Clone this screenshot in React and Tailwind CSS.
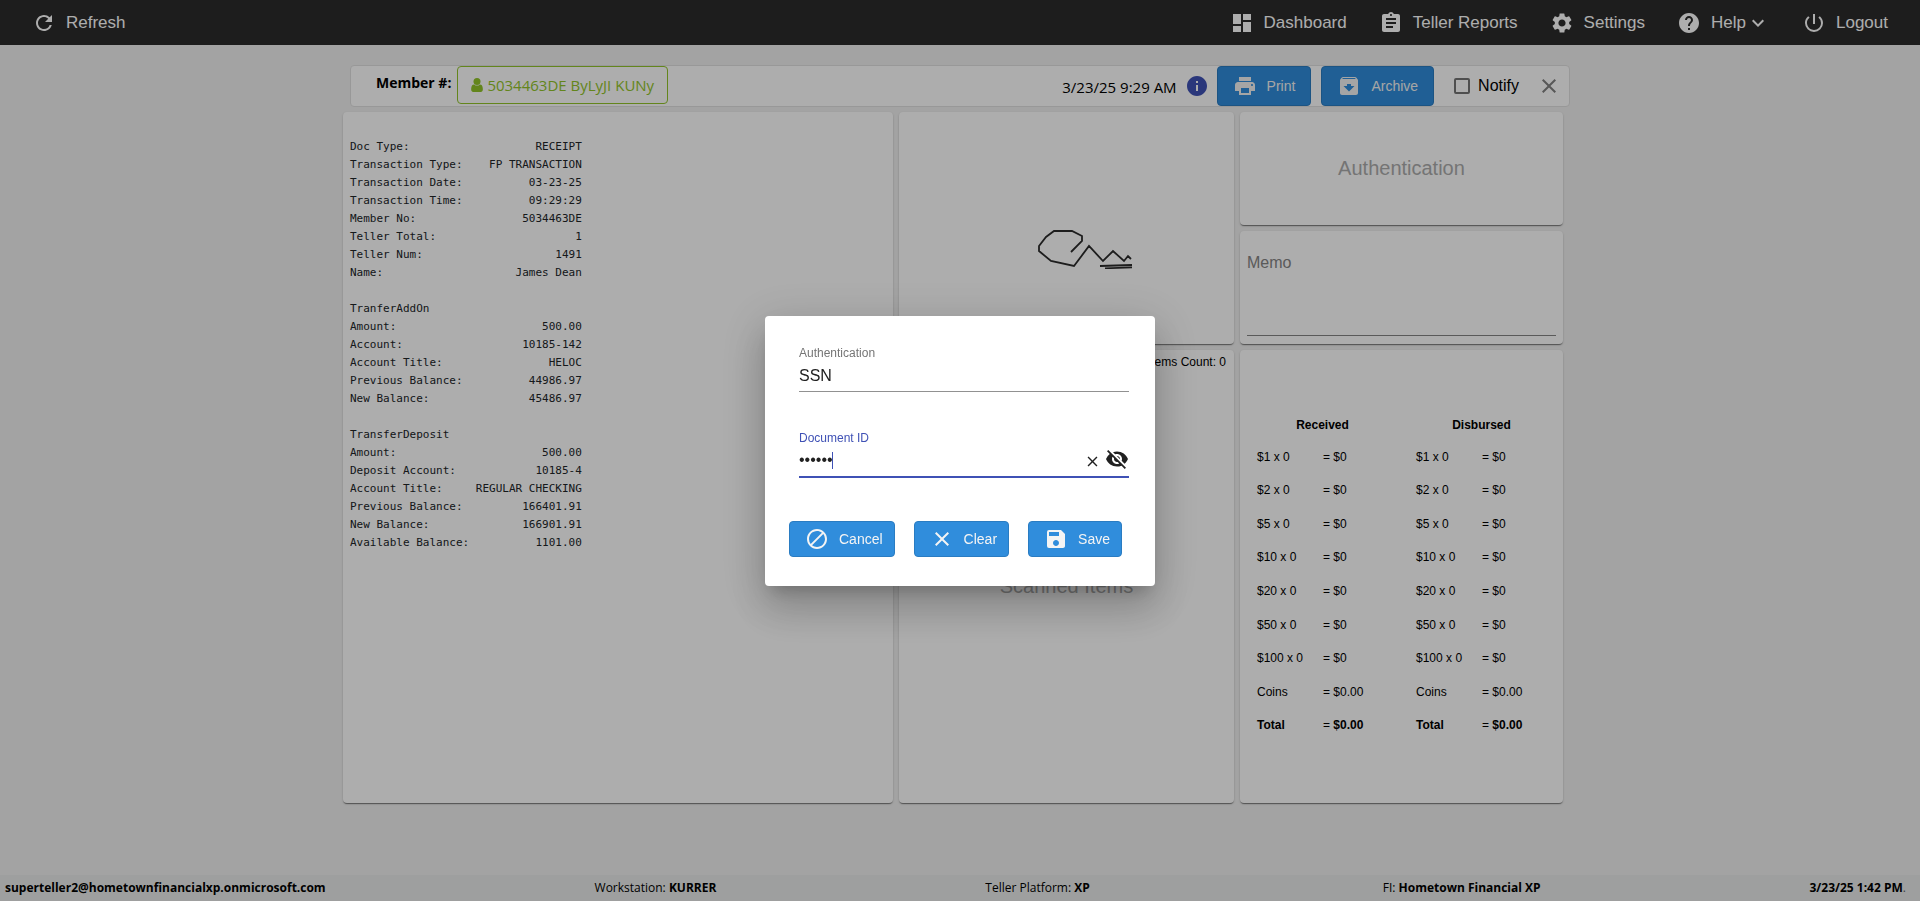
import {
  MdArchive,
  MdAssignment,
  MdBlock,
  MdClose,
  MdDashboard,
  MdHelp,
  MdInfo,
  MdKeyboardArrowDown,
  MdPowerSettingsNew,
  MdPrint,
  MdRefresh,
  MdSave,
  MdSettings,
  MdVisibilityOff,
} from 'react-icons/md'

const navLinks = [
  { label: 'Dashboard', icon: MdDashboard },
  { label: 'Teller Reports', icon: MdAssignment },
  { label: 'Settings', icon: MdSettings },
  { label: 'Help', icon: MdHelp, menu: true },
  { label: 'Logout', icon: MdPowerSettingsNew },
]

const RECEIPT_WIDTH = 35

const receipt = [
  ['Doc Type:', 'RECEIPT'],
  ['Transaction Type:', 'FP TRANSACTION'],
  ['Transaction Date:', '03-23-25'],
  ['Transaction Time:', '09:29:29'],
  ['Member No:', '5034463DE'],
  ['Teller Total:', '1'],
  ['Teller Num:', '1491'],
  ['Name:', 'James Dean'],
  [],
  ['TranferAddOn'],
  ['Amount:', '500.00'],
  ['Account:', '10185-142'],
  ['Account Title:', 'HELOC'],
  ['Previous Balance:', '44986.97'],
  ['New Balance:', '45486.97'],
  [],
  ['TransferDeposit'],
  ['Amount:', '500.00'],
  ['Deposit Account:', '10185-4'],
  ['Account Title:', 'REGULAR CHECKING'],
  ['Previous Balance:', '166401.91'],
  ['New Balance:', '166901.91'],
  ['Available Balance:', '1101.00'],
]

const receiptText = receipt
  .map(([label = '', value = '']) => label + value.padStart(RECEIPT_WIDTH - label.length))
  .join('\n')

const cashRows = [
  ['$1 x 0', '$0'],
  ['$2 x 0', '$0'],
  ['$5 x 0', '$0'],
  ['$10 x 0', '$0'],
  ['$20 x 0', '$0'],
  ['$50 x 0', '$0'],
  ['$100 x 0', '$0'],
  ['Coins', '$0.00'],
]

const cardShadow =
  'shadow-[0_2px_1px_-1px_rgba(0,0,0,0.3),0_1px_1px_0_rgba(0,0,0,0.2),0_1px_3px_0_rgba(0,0,0,0.12)]'

function Card({ className = '', children }) {
  return <section className={`min-w-0 rounded bg-white ${cardShadow} ${className}`}>{children}</section>
}

function ActionButton({ icon: Icon, label, className }) {
  return (
    <button
      type="button"
      className={`flex items-center gap-[10px] rounded border border-[#2a7cc2] bg-[#308ddc] pl-[15px] text-sm text-[#f4f4f4] ${className}`}
    >
      <Icon className="h-6 w-6" />
      {label}
    </button>
  )
}

function UserIcon() {
  return (
    <svg className="h-[14px] w-3" viewBox="0 128 1280 1536" fill="currentColor" aria-hidden="true">
      <path d="M1280 1399q0 109-62.5 187t-150.5 78h-854q-88 0-150.5-78t-62.5-187q0-85 8.5-160.5t31.5-152 58.5-131 94-89 134.5-34.5q131 128 313 128t313-128q76 0 134.5 34.5t94 89 58.5 131 31.5 152 8.5 160.5z" />
      <circle cx="640" cy="512" r="384" />
    </svg>
  )
}

function NavBar() {
  return (
    <nav className="flex h-[45px] items-center justify-between bg-[#2c2c2c] px-8 text-[17px] text-white">
      <a href="#refresh" className="flex items-center gap-[10px]">
        <MdRefresh className="h-6 w-6" />
        Refresh
      </a>
      <div className="flex items-center gap-8">
        {navLinks.map(({ label, icon: Icon, menu }) => (
          <a key={label} href={`#${label.toLowerCase().replace(' ', '-')}`} className="flex items-center gap-[10px]">
            <Icon className="h-6 w-6" />
            <span className="flex items-center">
              {label}
              {menu && <MdKeyboardArrowDown className="h-6 w-6" />}
            </span>
          </a>
        ))}
      </div>
    </nav>
  )
}

function MemberBar() {
  return (
    <header className="mx-auto flex h-[42px] w-full max-w-[1220px] items-start justify-between rounded border border-[#e0e0e0] bg-white pl-[25px]">
      <div className="flex items-center gap-[6px]">
        <span className="pb-1 font-['Open_Sans',sans-serif] text-sm font-bold">Member #:</span>
        <button
          type="button"
          className="flex h-[38px] items-center gap-1 rounded border border-[#92c52a] px-[13px] font-['Open_Sans',sans-serif] text-[15px] text-[#92c52a]"
        >
          <UserIcon />
          5034463DE ByLyJI KUNy
        </button>
      </div>
      <div className="flex items-center">
        <time className="mr-2 pt-[2px] font-['Open_Sans',sans-serif] text-[15px]">3/23/25 9:29 AM</time>
        <MdInfo className="mr-2 h-6 w-6 text-[#3f51b5]" />
        <ActionButton icon={MdPrint} label="Print" className="mr-[10px] h-10 pr-[15px]" />
        <ActionButton icon={MdArchive} label="Archive" className="h-10 pr-[15px]" />
        <label className="mr-[18px] ml-5 flex items-center gap-2 text-base">
          <input type="checkbox" className="h-4 w-4 appearance-none rounded-[2px] border-2 border-[#757575]" />
          Notify
        </label>
        <button type="button" aria-label="Close" className="mr-2 text-[#808080]">
          <MdClose className="h-6 w-6" />
        </button>
      </div>
    </header>
  )
}

function Signature() {
  return (
    <svg className="h-[39px] w-[95px]" viewBox="0 0 95 39" fill="none" stroke="#2b2b2b" strokeWidth="1.8">
      <path d="M33 22 44 11V6L34 1H16L8 7 1 16v5l12 10 23 5 15-20 14 15 10-10 11 10 4-5 3 3" />
      <path d="M62 36 94 35M67 38.3 94 37.3" />
    </svg>
  )
}

function CashTable() {
  const sides = ['Received', 'Disbursed']

  return (
    <table className="h-[333px] w-full table-fixed text-left text-xs">
      <colgroup>
        <col className="w-[66px]" />
        <col className="w-[93px]" />
        <col className="w-[66px]" />
        <col />
      </colgroup>
      <thead>
        <tr className="h-[31px]">
          <th colSpan={2} className="pr-7 text-center">
            Received
          </th>
          <th colSpan={2} className="pr-4 text-center">
            Disbursed
          </th>
        </tr>
      </thead>
      <tbody>
        {cashRows.map(([label, amount]) => (
          <tr key={label}>
            {sides.map((side) => [
              <td key={`${side}-label`}>{label}</td>,
              <td key={`${side}-amount`}>= {amount}</td>,
            ])}
          </tr>
        ))}
        <tr>
          {sides.map((side) => [
            <td key={`${side}-label`} className="font-bold">
              Total
            </td>,
            <td key={`${side}-amount`}>
              = <strong>$0.00</strong>
            </td>,
          ])}
        </tr>
      </tbody>
    </table>
  )
}

function StatusBar() {
  return (
    <footer className="flex h-[26px] items-center justify-between bg-[#e9ebea] pr-[14px] pl-[5px] font-['Open_Sans',sans-serif] text-xs">
      <strong>superteller2@hometownfinancialxp.onmicrosoft.com</strong>
      <span>
        Workstation: <strong>KURRER</strong>
      </span>
      <span>
        Teller Platform: <strong>XP</strong>
      </span>
      <span className="pl-6">
        FI: <strong>Hometown Financial XP</strong>
      </span>
      <span>
        <strong>3/23/25 1:42 PM</strong>
        <span className="text-[#666]">.</span>
      </span>
    </footer>
  )
}

function AuthDialog() {
  return (
    <div className="fixed inset-0 flex items-center justify-center bg-black/32">
      <form
        role="dialog"
        aria-label="Authentication"
        className="h-[270px] w-[390px] rounded bg-white text-[#212121] shadow-[0_11px_15px_-7px_rgba(0,0,0,0.2),0_24px_38px_3px_rgba(0,0,0,0.14),0_9px_46px_8px_rgba(0,0,0,0.12)]"
      >
        <div className="pt-[29px] pr-[26px] pl-[34px]">
          <label htmlFor="auth-type" className="block text-xs leading-4 text-[#757575]">
            Authentication
          </label>
          <input
            id="auth-type"
            type="text"
            defaultValue="SSN"
            className="h-[31px] w-full border-b border-[#919191] text-base outline-none"
          />
        </div>
        <div className="pt-[38px] pr-[26px] pl-[34px]">
          <label htmlFor="document-id" className="block text-xs leading-4 text-[#3f51b5]">
            Document ID
          </label>
          <div className="relative flex h-8 items-center border-b-2 border-[#3f51b5] pb-[2px]">
            <input
              id="document-id"
              type="password"
              defaultValue="503446"
              className="min-w-0 flex-1 text-base outline-none"
            />
            {/* text cursor after the last character */}
            <span className="absolute top-[6px] left-[33px] h-[17px] w-px bg-[#3f51b5]" />
            <button type="button" aria-label="Clear document ID" className="mr-1 pt-1">
              <MdClose className="h-[17px] w-[17px]" />
            </button>
            <button type="button" aria-label="Show document ID" className="pb-[2px]">
              <MdVisibilityOff className="h-6 w-6" />
            </button>
          </div>
        </div>
        <div className="flex gap-[19px] pt-[43px] pl-6">
          <ActionButton icon={MdBlock} label="Cancel" className="h-9 pr-[11px]" />
          <ActionButton icon={MdClose} label="Clear" className="h-9 pr-[11px]" />
          <ActionButton icon={MdSave} label="Save" className="h-9 pr-[11px]" />
        </div>
      </form>
    </div>
  )
}

export default function App() {
  return (
    <div className="flex min-h-screen flex-col bg-[#f1f1f1] font-['Liberation_Sans',Arial,sans-serif] text-black">
      <NavBar />

      <main className="flex flex-1 flex-col pt-5 pb-[72px]">
        <MemberBar />

        <div className="mt-[5px] flex flex-1 pr-[14px]">
          <div className="mx-auto grid w-full max-w-[1220px] grid-cols-[550fr_335fr_323fr] grid-rows-[113px_113px_1fr] gap-[6px]">
            <Card className="row-span-3 px-[7px] pt-[26px]">
              <pre className="font-['DejaVu_Sans_Mono',monospace] text-[11px] leading-[18px] text-[#212529]">
                {receiptText}
              </pre>
            </Card>

            <Card className="row-span-2 flex items-center justify-center pt-[42px] pl-[38px]">
              <Signature />
            </Card>

            <Card className="flex items-center justify-center pb-[2px] text-xl text-[#acacac]">Authentication</Card>

            <Card className="px-[7px] pt-5">
              <textarea
                aria-label="Memo"
                placeholder="Memo"
                className="block h-[85px] w-full resize-none border-b border-[#858585] text-base outline-none placeholder:text-[#858585]"
              />
            </Card>

            <Card className="col-start-2 flex flex-col pb-[2px]">
              <p className="px-2 pt-1 text-right text-xs leading-4">Items Count: 0</p>
              <p className="flex flex-1 items-center justify-center text-xl text-[#acacac]">Scanned Items</p>
            </Card>

            <Card className="flex items-center pb-[2px] pl-[17px]">
              <CashTable />
            </Card>
          </div>
        </div>
      </main>

      <StatusBar />
      <AuthDialog />
    </div>
  )
}
